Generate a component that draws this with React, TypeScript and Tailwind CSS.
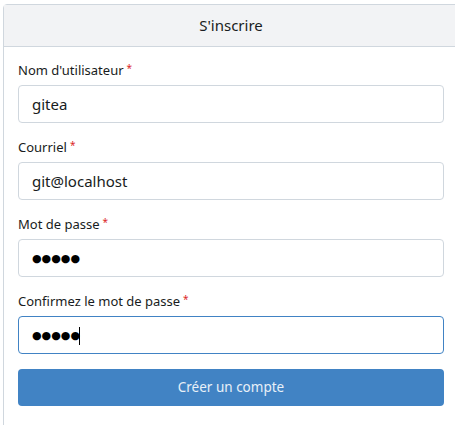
import React from 'react'

function Field({ label, value, secret = false, focused = false }: { label: string; value: string; secret?: boolean; focused?: boolean }) {
  return (
    <div className="mb-[15px]">
      <label className="flex h-[20px] items-center text-[13px] text-[#181c21] mb-[4px]">
        {label}
        <span className="ml-[3px] -mt-[6px] text-[10px] text-[#db2828]">*</span>
      </label>
      <div className="relative">
        <input
          readOnly
          type="text"
          defaultValue={secret ? '●●●●●' : value}
          className={
            'block h-[38px] w-full rounded-[4px] border bg-white px-[13px] text-[#181c21] outline-none ' +
            (secret ? "font-['DejaVu_Sans',sans-serif] text-[11px] text-black " : 'text-[15px] ') +
            (focused ? 'border-[#4183c4]' : 'border-[#d0d7de]')
          }
        />
        {focused && <span className="absolute left-[61px] top-[11px] h-[18px] w-px bg-black" />}
      </div>
    </div>
  )
}

export default function App() {
  return (
    <div className="min-h-screen bg-white pl-[3px] pt-[4px] font-['Noto_Sans',sans-serif] overflow-hidden">
      <div className="w-[456px] border border-[#d0d7de] rounded-t-[4px]">
        <div className="h-[42px] flex items-center justify-center bg-[#f2f3f5] border-b border-[#d0d7de] text-[15px] text-[#181c21]">
          S'inscrire
        </div>
        <div className="px-[14px] pt-[14px] pb-[20px]">
          <Field label="Nom d'utilisateur" value="gitea" />
          <Field label="Courriel" value="git@localhost" />
          <Field label="Mot de passe" value="12345" secret />
          <Field label="Confirmez le mot de passe" value="12345" secret focused />
          <button className="block h-[37px] w-full rounded-[4px] bg-[#4183c4] text-[13.5px] text-[#e8f0f8]">
            Créer un compte
          </button>
          <div className="mt-[13px] text-center text-[14px] text-[#181c21]">OU</div>
        </div>
      </div>
    </div>
  )
}
